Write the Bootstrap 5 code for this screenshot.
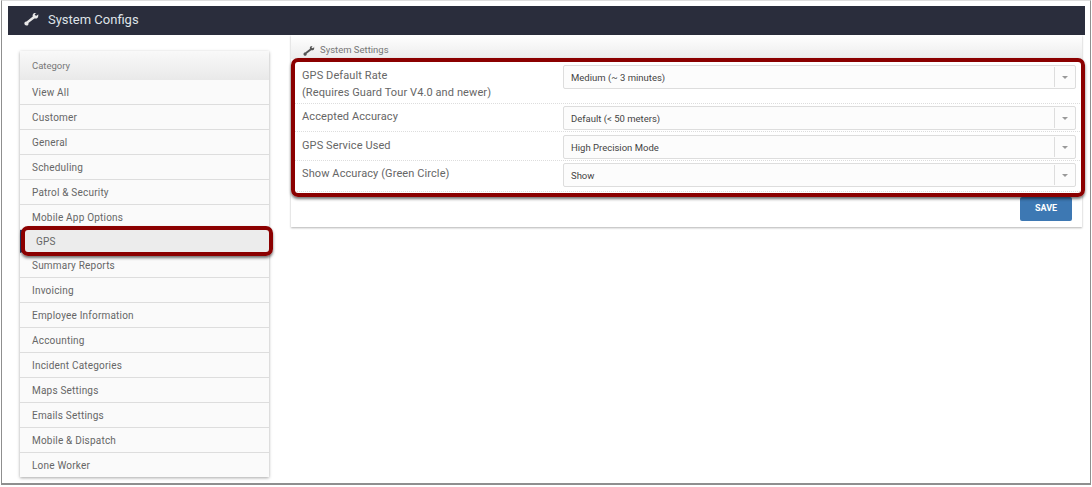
<!DOCTYPE html>
<html lang="en">
<head>
<meta charset="utf-8">
<title>System Configs</title>
<link href="https://cdn.jsdelivr.net/npm/bootstrap@5.3.0/dist/css/bootstrap.min.css" rel="stylesheet">
<style>
html,body{height:487px;overflow:hidden;background:#fff}
body{font-family:Roboto,"Liberation Sans",sans-serif;color:#666;position:relative}
.shot-frame{position:absolute;left:1px;top:0;width:1090px;height:485px;border:1px solid #8f8f8f;border-top-color:#ddd;border-bottom-width:2px;pointer-events:none}
.page-wrap{padding:6px 7px 0 8px}
.top-bar{height:29px;background:#2a2d3c;color:#dfe3e8;font-size:13px;padding:0 0 2px 16px;gap:9px}
.top-bar svg{width:15px;height:13px;fill:#e8e8e8}
.body-row{gap:22px;padding-left:12px;align-items:flex-start}
.side-col{width:249px;margin-top:16px;box-shadow:0 1px 3px rgba(0,0,0,.35);flex:none}
.side-head{height:29px;font-size:9.5px;color:#777;padding:1px 0 0 12px;background:linear-gradient(#f9f9f9,#e9e9e9)}
.side-item{height:25px;font-size:10px;letter-spacing:.2px;color:#666;background:#fafafa;border-bottom:1px solid #ddd;padding:1px 0 0 12px;text-decoration:none}
.side-item.current{height:23px;background:#ececec;border-left:2px solid #24406e;padding-left:14px}
.side-item:last-child{border-bottom:0;height:24px}
.main-col{width:791px;box-shadow:0 1px 2px rgba(0,0,0,.3);height:192px;flex:none}
.main-head{height:24px;font-size:9.5px;color:#777;padding:7px 0 0 12px;gap:5px;background:linear-gradient(#fff,#ececec)}
.main-head svg{width:12px;height:10px;fill:#555}
.set-row{border-bottom:1px dotted #ddd;padding:0 6px 0 11px;font-size:11px;letter-spacing:.1px;line-height:17px;color:#666}
.set-row:last-of-type{border-bottom:0}
.row-a{height:45px;padding-top:6px}
.row-b{height:28px;padding-top:2px}
.row-c{height:29px;padding-top:3px}
.row-d{height:31px;padding-top:2px}
.set-label{width:261px;flex:none;padding-top:2px}
.fake-select{flex:1;height:24px;background:#fcfcfc;border:1px solid #ddd;border-radius:2px;font-size:9.5px;color:#444;padding-left:7px;letter-spacing:0}
.fake-select .sel-text{flex:1}
.sel-arrow{width:21px;height:20px;border-left:1px solid #ddd;flex:none}
.sel-arrow::after{content:"";border-left:3px solid transparent;border-right:3px solid transparent;border-top:3px solid #999}
.save-bar{padding:5px 10px 0 0}
.save-btn{width:52px;height:24px;padding:0;border-radius:2px;background:#3d78b3;border:0;color:#fff;font-size:9px;font-weight:700}
.save-btn:hover{background:#3d78b3}
.callout{position:absolute;border:4px solid #8b0000;border-radius:7px;box-shadow:0 2px 3px rgba(0,0,0,.55);pointer-events:none}
.callout-a{left:291px;top:58px;width:794px;height:139px}
.callout-b{left:21px;top:226px;width:252px;height:30px}
</style>
</head>
<body>
<div class="page-wrap">
  <div class="top-bar d-flex align-items-center">
    <svg viewBox="0 0 16 14"><path d="M15.6 1.2 13.4 3l-1.6-.5-.3-1.4L13.4 0c-1.4-.4-2.8 0-3.6 1-.7.8-.8 1.9-.4 2.8L2.6 9.2C1.4 9 .2 10 .3 11.4c.1 1.5 1.4 2.4 2.8 2.1 1.2-.3 1.9-1.4 1.6-2.6l6.4-5.1c1.2.5 2.6.2 3.5-.7.7-.9.9-2.3.5-3.9z"/></svg>
    <span>System Configs</span>
  </div>
  <div class="body-row d-flex">
    <div class="side-col d-flex flex-column">
      <div class="side-head d-flex align-items-center">Category</div>
      <a class="side-item d-flex align-items-center" href="#">View All</a>
      <a class="side-item d-flex align-items-center" href="#">Customer</a>
      <a class="side-item d-flex align-items-center" href="#">General</a>
      <a class="side-item d-flex align-items-center" href="#">Scheduling</a>
      <a class="side-item d-flex align-items-center" href="#">Patrol &amp; Security</a>
      <a class="side-item d-flex align-items-center" href="#">Mobile App Options</a>
      <a class="side-item current d-flex align-items-center" href="#">GPS</a>
      <a class="side-item d-flex align-items-center" href="#">Summary Reports</a>
      <a class="side-item d-flex align-items-center" href="#">Invoicing</a>
      <a class="side-item d-flex align-items-center" href="#">Employee Information</a>
      <a class="side-item d-flex align-items-center" href="#">Accounting</a>
      <a class="side-item d-flex align-items-center" href="#">Incident Categories</a>
      <a class="side-item d-flex align-items-center" href="#">Maps Settings</a>
      <a class="side-item d-flex align-items-center" href="#">Emails Settings</a>
      <a class="side-item d-flex align-items-center" href="#">Mobile &amp; Dispatch</a>
      <a class="side-item d-flex align-items-center" href="#">Lone Worker</a>
    </div>
    <div class="main-col">
      <div class="main-head d-flex align-items-center">
        <svg viewBox="0 0 16 14"><path d="M15.6 1.2 13.4 3l-1.6-.5-.3-1.4L13.4 0c-1.4-.4-2.8 0-3.6 1-.7.8-.8 1.9-.4 2.8L2.6 9.2C1.4 9 .2 10 .3 11.4c.1 1.5 1.4 2.4 2.8 2.1 1.2-.3 1.9-1.4 1.6-2.6l6.4-5.1c1.2.5 2.6.2 3.5-.7.7-.9.9-2.3.5-3.9z"/></svg>
        <span>System Settings</span>
      </div>
      <div class="set-row row-a d-flex align-items-start">
        <div class="set-label">GPS Default Rate<br>(Requires Guard Tour V4.0 and newer)</div>
        <div class="fake-select d-flex align-items-center"><span class="sel-text">Medium (~ 3 minutes)</span><span class="sel-arrow d-flex align-items-center justify-content-center"></span></div>
      </div>
      <div class="set-row row-b d-flex align-items-start">
        <div class="set-label">Accepted Accuracy</div>
        <div class="fake-select d-flex align-items-center"><span class="sel-text">Default (&lt; 50 meters)</span><span class="sel-arrow d-flex align-items-center justify-content-center"></span></div>
      </div>
      <div class="set-row row-c d-flex align-items-start">
        <div class="set-label">GPS Service Used</div>
        <div class="fake-select d-flex align-items-center"><span class="sel-text">High Precision Mode</span><span class="sel-arrow d-flex align-items-center justify-content-center"></span></div>
      </div>
      <div class="set-row row-d d-flex align-items-start">
        <div class="set-label">Show Accuracy (Green Circle)</div>
        <div class="fake-select d-flex align-items-center"><span class="sel-text">Show</span><span class="sel-arrow d-flex align-items-center justify-content-center"></span></div>
      </div>
      <div class="save-bar d-flex justify-content-end">
        <button class="btn save-btn" type="button">SAVE</button>
      </div>
    </div>
  </div>
</div>
<div class="callout callout-a"></div>
<div class="callout callout-b"></div>
<div class="shot-frame"></div>
<script src="https://cdn.jsdelivr.net/npm/bootstrap@5.3.0/dist/js/bootstrap.bundle.min.js"></script>
</body>
</html>
